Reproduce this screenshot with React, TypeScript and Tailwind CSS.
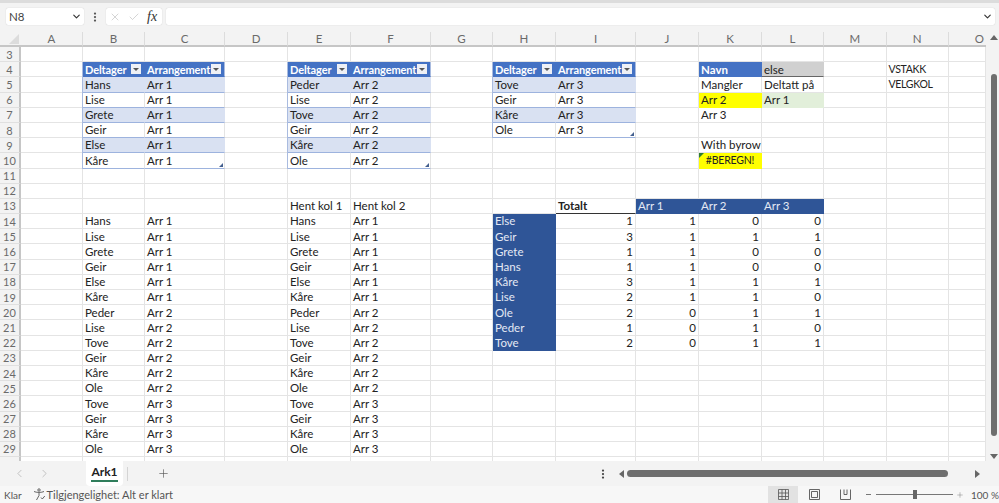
import React from 'react';
import { Check, ChevronDown, ChevronLeft, ChevronRight, EllipsisVertical, Plus, X } from 'lucide-react';

type Kind =
  | 'plain' | 'tableHead' | 'band' | 'tableRow' | 'caps'
  | 'blueHead' | 'greyHead' | 'yellow' | 'green' | 'error' | 'darkBlue' | 'bold' | 'num';

interface CellData {
  text: string;
  kind?: Kind;
}

const columns = ['A', 'B', 'C', 'D', 'E', 'F', 'G', 'H', 'I', 'J', 'K', 'L', 'M', 'N', 'O'];
const rowNumbers = Array.from({ length: 28 }, (_, i) => i + 3);

const kindClass: Record<Kind, string> = {
  plain: 'border-b-[#e4e4e4] border-r-[#e4e4e4] text-[11.5px]',
  tableHead: 'bg-[#4472c4] text-white font-bold text-[11px] tracking-[-0.1px] border-b-[#4472c4] border-r-[#4472c4]',
  band: 'bg-[#d9e1f2] border-b-[#9db3de] border-r-[#d9e1f2] text-[11.5px]',
  tableRow: 'border-b-[#9db3de] border-r-[#e4e4e4] text-[11.5px]',
  caps: 'border-b-[#e4e4e4] border-r-[#e4e4e4] text-[10.5px] tracking-[-0.3px]',
  blueHead: 'bg-[#4472c4] text-white font-bold text-[11.5px] border-b-[#4472c4] border-r-[#4472c4]',
  greyHead: 'bg-[#d0d0d0] border-b-[#666] border-r-[#d0d0d0] text-[11.5px]',
  yellow: 'bg-[#ffff00] border-b-[#ffff00] border-r-[#ffff00] text-[11.5px]',
  green: 'bg-[#e2efda] border-b-[#e2efda] border-r-[#e2efda] text-[11.5px]',
  error: 'bg-[#ffff00] justify-center border-b-[#ffff00] border-r-[#ffff00] text-[10.5px] tracking-[-0.2px]',
  darkBlue: 'bg-[#2f5597] text-[#e4e9f4] border-b-[#2f5597] border-r-[#2f5597] text-[11.5px]',
  bold: 'font-bold border-b-[#333] border-r-[#e4e4e4] text-[11.5px]',
  num: 'justify-end border-b-[#e4e4e4] border-r-[#e4e4e4] text-[11.5px]',
};

const cells: Record<string, CellData> = {};

function put(col: string, row: number, text: string, kind: Kind = 'plain') {
  cells[col + row] = { text, kind };
}

// The three source tables at the top
function putTable(c1: string, c2: string, names: string[], arr: string) {
  put(c1, 4, 'Deltager', 'tableHead');
  put(c2, 4, 'Arrangement', 'tableHead');
  names.forEach((name, i) => {
    const kind = i % 2 === 0 ? 'band' : 'tableRow';
    put(c1, 5 + i, name, kind);
    put(c2, 5 + i, arr, kind);
  });
}

const arr1 = ['Hans', 'Lise', 'Grete', 'Geir', 'Else', 'Kåre'];
const arr2 = ['Peder', 'Lise', 'Tove', 'Geir', 'Kåre', 'Ole'];
const arr3 = ['Tove', 'Geir', 'Kåre', 'Ole'];

putTable('B', 'C', arr1, 'Arr 1');
putTable('E', 'F', arr2, 'Arr 2');
putTable('H', 'I', arr3, 'Arr 3');

// Stacked lists
const stacked = [
  ...arr1.map(n => [n, 'Arr 1']),
  ...arr2.map(n => [n, 'Arr 2']),
  ...arr3.map(n => [n, 'Arr 3']),
];
put('E', 13, 'Hent kol 1');
put('F', 13, 'Hent kol 2');
stacked.forEach(([name, arr], i) => {
  put('B', 14 + i, name);
  put('C', 14 + i, arr);
  put('E', 14 + i, name);
  put('F', 14 + i, arr);
});

// Lookup block
put('K', 4, 'Navn', 'blueHead');
put('L', 4, 'else', 'greyHead');
put('K', 5, 'Mangler');
put('L', 5, 'Deltatt på');
put('K', 6, 'Arr 2', 'yellow');
put('L', 6, 'Arr 1', 'green');
put('K', 7, 'Arr 3');
put('K', 9, 'With byrow');
put('K', 10, '#BEREGN!', 'error');
put('N', 4, 'VSTAKK', 'caps');
put('N', 5, 'VELGKOL', 'caps');

// Count matrix
put('I', 13, 'Totalt', 'bold');
put('J', 13, 'Arr 1', 'darkBlue');
put('K', 13, 'Arr 2', 'darkBlue');
put('L', 13, 'Arr 3', 'darkBlue');
const totals: [string, number, number, number, number][] = [
  ['Else', 1, 1, 0, 0],
  ['Geir', 3, 1, 1, 1],
  ['Grete', 1, 1, 0, 0],
  ['Hans', 1, 1, 0, 0],
  ['Kåre', 3, 1, 1, 1],
  ['Lise', 2, 1, 1, 0],
  ['Ole', 2, 0, 1, 1],
  ['Peder', 1, 0, 1, 0],
  ['Tove', 2, 0, 1, 1],
];
totals.forEach(([name, t, a, b, c], i) => {
  put('H', 14 + i, name, 'darkBlue');
  put('I', 14 + i, String(t), 'num');
  put('J', 14 + i, String(a), 'num');
  put('K', 14 + i, String(b), 'num');
  put('L', 14 + i, String(c), 'num');
});

const FilterButton = () => (
  <span className="ml-auto mr-[1px] flex h-[10px] w-[10px] shrink-0 items-center justify-center bg-[#eef0f5]">
    <span className="h-0 w-0 border-x-[3px] border-t-[3px] border-x-transparent border-t-[#555]" />
  </span>
);

const Corner = () => (
  <span className="absolute bottom-[1px] right-[1px] h-0 w-0 border-b-[4px] border-l-[4px] border-b-[#44608f] border-l-transparent" />
);

const GridCell = ({ col, row }: { col: string; row: number }) => {
  const cell = cells[col + row];
  const kind = cell?.kind ?? 'plain';
  const isFilter = cell && kind === 'tableHead';
  const hasCorner = col + row === 'C10' || col + row === 'F10' || col + row === 'I8';
  const inBody = col === 'I' || col === 'H' ? row >= 4 && row <= 8 : row >= 4 && row <= 10;
  const tableEdge = ['C', 'F', 'I'].includes(col) && inBody;
  const tableStart = ['B', 'E', 'H'].includes(col) && inBody;

  return (
    <div
      className={`relative flex min-w-0 items-center whitespace-nowrap border-b border-r pl-[2px] pr-[2px] leading-none text-[#222] ${kindClass[kind]} ${tableEdge ? 'border-r-[#a9bbdf]' : ''} ${tableStart ? 'shadow-[-1px_0_0_#a9bbdf]' : ''}`}
    >
      {cell?.text}
      {isFilter && <FilterButton />}
      {hasCorner && <Corner />}
      {kind === 'error' && (
        <span className="absolute left-0 top-0 h-0 w-0 border-r-[5px] border-t-[5px] border-r-transparent border-t-[#2f7d32]" />
      )}
    </div>
  );
};

const FormulaBar = () => (
  <div className="flex h-[29px] shrink-0 items-start gap-[4px] pl-[6px] pr-[4px] pt-[5px] text-[#444]">
    <div className="flex h-[17px] w-[78px] items-center justify-between rounded-[2px] bg-white pl-[3px] pr-[2px] text-[11.5px] shadow-[0_0_1px_#bbb]">
      N8
      <ChevronDown size={11} strokeWidth={2.5} className="text-[#333]" />
    </div>
    <EllipsisVertical size={12} strokeWidth={2.5} className="mx-[1px] mt-[3px] text-[#555]" />
    <div className="flex h-[17px] w-[56px] items-center gap-[7px] rounded-[2px] bg-white pl-[3px] shadow-[0_0_1px_#bbb]">
      <X size={12} strokeWidth={1} className="text-[#aaa]" />
      <Check size={12} strokeWidth={1} className="text-[#aaa]" />
      <span className="font-['Liberation_Serif',serif] text-[14px] italic leading-none text-[#333]">fx</span>
    </div>
    <div className="flex h-[17px] flex-1 items-center justify-end rounded-[2px] bg-white pr-[2px] shadow-[0_0_1px_#bbb]">
      <ChevronDown size={11} strokeWidth={2.5} className="text-[#333]" />
    </div>
  </div>
);

const Sheet = () => (
  <div className="flex h-[429px] shrink-0 overflow-hidden">
    <div className="grid w-[986px] shrink-0 grid-cols-[21px_62px_62px_80px_63px_63px_80px_62px_63px_80px_63px_63px_62px_62.5px_62.5px_37px] grid-rows-[15px_repeat(28,15.2px)] overflow-hidden bg-white">
      <div className="relative border-b-2 border-[#c6c6c6] bg-[#f3f3f3]">
        <span className="absolute bottom-[1px] right-[2px] h-0 w-0 border-b-[10px] border-l-[10px] border-b-[#dcdcdc] border-l-transparent" />
      </div>
      {columns.map(col => (
        <div
          key={col}
          className={`flex items-center border-b-2 border-b-[#c6c6c6] bg-[#f3f3f3] text-[11.5px] leading-none text-[#6a6a6a] ${col === 'O' ? 'justify-end pr-[2px]' : 'justify-center border-r border-r-[#dcdcdc]'}`}
        >
          {col}
        </div>
      ))}
      {rowNumbers.map(row => (
        <React.Fragment key={row}>
          <div className="flex items-center justify-center border-b border-r-2 border-b-[#e0e0e0] border-r-[#c6c6c6] bg-[#f3f3f3] text-[11px] leading-none text-[#6a6a6a]">
            {row}
          </div>
          {columns.map(col => (
            <GridCell key={col} col={col} row={row} />
          ))}
        </React.Fragment>
      ))}
    </div>
    <div className="flex flex-1 flex-col items-center bg-[#f3f3f3] pl-[3px] pt-[3px]">
      <span className="h-0 w-0 border-x-[4px] border-b-[5px] border-x-transparent border-b-[#666]" />
      <div className="mt-[34px] h-[362px] w-[6px] shrink-0 rounded-full bg-[#6e6e6e]" />
      <span className="mt-[18px] h-0 w-0 border-x-[4px] border-t-[5px] border-x-transparent border-t-[#666]" />
    </div>
  </div>
);

const TabBar = () => (
  <div className="flex h-[25px] shrink-0 items-center bg-[#f3f3f3] text-[#555]">
    <ChevronLeft size={13} strokeWidth={1} className="ml-[13px] text-[#999]" />
    <ChevronRight size={13} strokeWidth={1} className="ml-[12px] text-[#999]" />
    <div className="ml-[35px] flex h-full w-[37px] flex-col items-center justify-center rounded-b-[4px] bg-white text-[12px] font-bold leading-none text-[#222]">
      <span className="border-b-2 border-[#2f7d5b] pb-[2px]">Ark1</span>
    </div>
    <div className="ml-[4px] h-[14px] w-px bg-[#d4d4d4]" />
    <Plus size={13} strokeWidth={1.2} className="ml-[29px] text-[#555]" />
    <EllipsisVertical size={12} strokeWidth={2.5} className="ml-[427px] text-[#444]" />
    <span className="ml-[10px] h-0 w-0 border-y-[4px] border-r-[5px] border-y-transparent border-r-[#666]" />
    <div className="ml-[3px] h-[7px] w-[321px] rounded-full bg-[#6e6e6e]" />
    <span className="ml-[27px] h-0 w-0 border-y-[4px] border-l-[5px] border-y-transparent border-l-[#666]" />
  </div>
);

const StatusBar = () => (
  <div className="flex h-[17px] flex-1 items-center bg-[#f7f7f7] pl-[4px] text-[10px] leading-none text-[#555]">
    Klar
    <svg width="13" height="13" viewBox="0 0 13 13" fill="none" stroke="#555" strokeWidth="0.9" className="ml-[11px]">
      <circle cx="6" cy="2" r="1.2" />
      <path d="M1 3.5c2 1.2 8 1.2 10 0M6 4.5v3M6 7.5L3.5 12M8 9.5l1.3 1.5 2.5-3" />
    </svg>
    <span className="ml-[1px] text-[11px]">Tilgjengelighet: Alt er klart</span>
    <div className="ml-auto flex h-full items-center">
      <div className="flex h-full w-[30px] items-center justify-center bg-[#e2e2e2]">
        <svg width="11" height="11" viewBox="0 0 11 11" fill="none" stroke="#555" strokeWidth="0.8">
          <path d="M.5.5h10v10H.5zM.5 4h10M.5 7.5h10M4 .5v10M7.5 .5v10" />
        </svg>
      </div>
      <div className="flex w-[32px] items-center justify-center">
        <svg width="11" height="11" viewBox="0 0 11 11" fill="none" stroke="#555" strokeWidth="0.9">
          <path d="M.5.5h10v10H.5zM2.5 2.5h6v6h-6z" />
        </svg>
      </div>
      <div className="flex w-[30px] items-center justify-center">
        <svg width="11" height="11" viewBox="0 0 11 11" fill="none" stroke="#555" strokeWidth="0.9">
          <path d="M.5.5v10h10V.5M4 .5v5h3V.5" />
        </svg>
      </div>
      <span className="ml-[6px] h-px w-[5px] bg-[#777]" />
      <div className="relative ml-[5px] flex w-[77px] items-center justify-center">
        <div className="h-px w-full bg-[#777]" />
        <span className="absolute h-[9px] w-[4px] bg-[#666]" />
      </div>
      <Plus size={8} strokeWidth={1.2} className="ml-[3px] text-[#666]" />
      <span className="ml-[7px] w-[28px] whitespace-nowrap text-[10px]">100 %</span>
    </div>
  </div>
);

export default function App() {
  return (
    <div className="flex h-[503px] w-[999px] flex-col overflow-hidden bg-[#f3f3f3] font-['Lato','Noto_Sans',sans-serif]">
      <div className="h-[3px] shrink-0 bg-[#dcdcdc]" />
      <FormulaBar />
      <Sheet />
      <TabBar />
      <StatusBar />
    </div>
  );
}
